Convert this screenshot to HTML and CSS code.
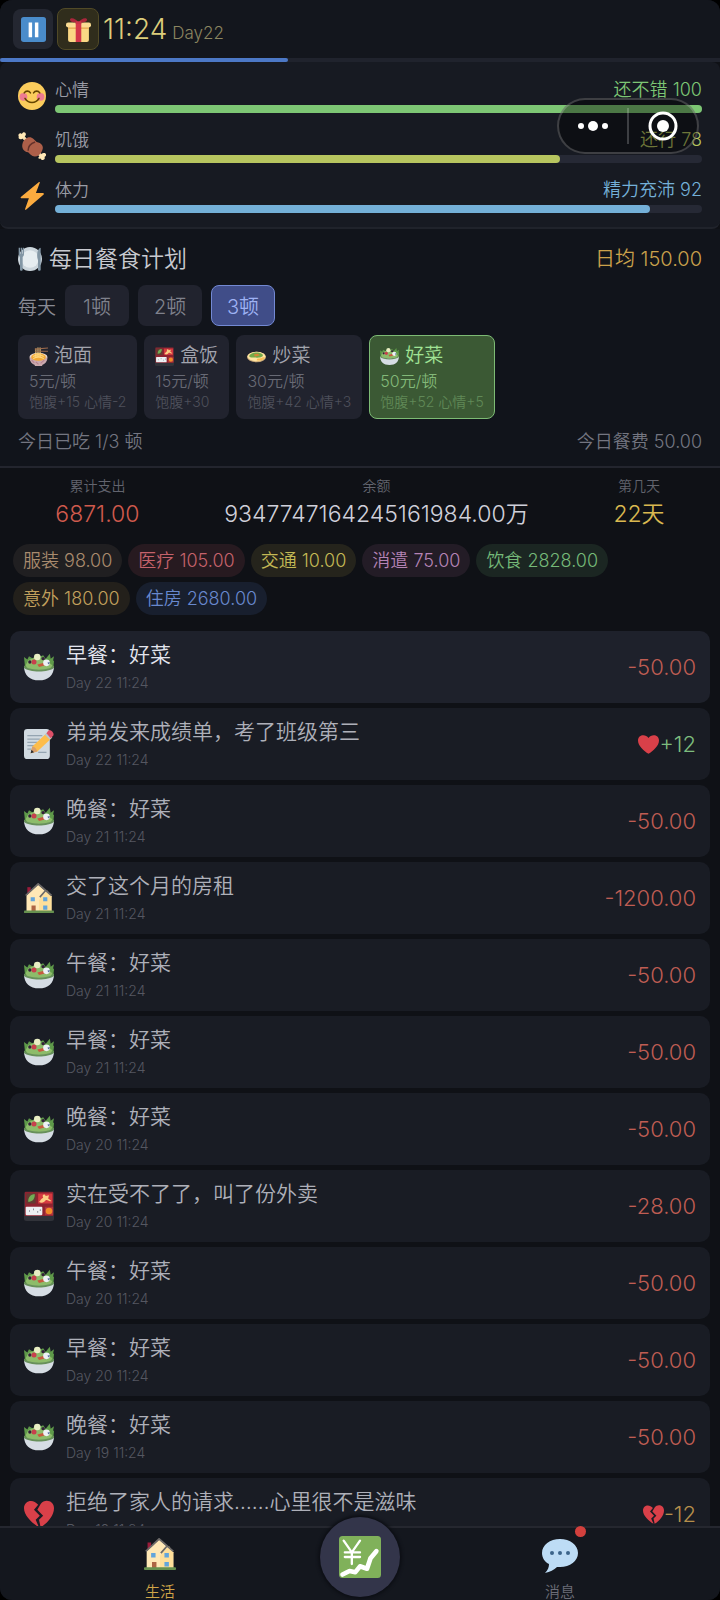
FILE: index.html
```html
<!DOCTYPE html>
<html lang="zh-CN">
<head>
  <meta charset="UTF-8" />
  <meta name="viewport" content="width=device-width, initial-scale=1.0"/>
  <title>生活</title>
  <link rel="stylesheet" href="styles.css">
</head>
<body>
  <!-- shared icons -->
  <svg class="sprite" aria-hidden="true">
    <symbol id="i-pause" viewBox="0 0 36 36">
      <rect width="36" height="36" rx="4" fill="#4a8ccb"/>
      <path d="M11 8h5v21h-5zM20 8h5v21h-5z" fill="#fff"/>
    </symbol>
    <symbol id="i-gift" viewBox="0 0 36 36">
      <path d="M3 14h30v19a3 3 0 0 1-3 3H6a3 3 0 0 1-3-3z" fill="#fbd884"/>
      <path d="M3 14h30v3H3z" fill="#e4a64f"/>
      <rect y="8" width="36" height="7" rx="3" fill="#fbdc92"/>
      <path d="M14 8h8v28h-8z" fill="#d4374a"/>
      <path d="M18 8C15 2 7 0 6 3c-2 4 7 6 12 5zM18 8c3-6 11-8 12-5 2 4-7 6-12 5z" fill="#a9263b"/>
      <path d="M14 6h8v4h-8z" fill="#ca3348"/>
    </symbol>
    <symbol id="i-smile" viewBox="0 0 36 36">
      <circle cx="18" cy="18" r="18" fill="#fbcc5c"/>
      <circle cx="7" cy="19" r="5" fill="#ee7b91"/>
      <circle cx="29" cy="19" r="5" fill="#ee7b91"/>
      <path d="M8 14c2-3 6-3 8 0M20 14c2-3 6-3 8 0M9 21c4 7 14 7 18 0" fill="none" stroke="#664500" stroke-width="2" stroke-linecap="round"/>
    </symbol>
    <symbol id="i-meat" viewBox="0 0 36 36">
      <path d="M5 5l8 8M23 24l8 8" stroke="#f4dfb0" stroke-width="4"/>
      <path d="M1 6c-2-4 3-6 4-3 1-4 6-3 5 1-1 3-3 3-5 5-3 1-5-1-4-3zM28 31c2-3 3-4 5-4 4 0 4 4 1 5 2 3-3 6-5 2-3 1-4-1-1-3z" fill="#ffe8b6"/>
      <path d="M6 14C8 8 15 4 20 9l4 4c6 1 10 6 7 11-3 7-10 10-15 5l-3-3c-6-1-9-6-7-12z" fill="#ad5f49"/>
      <path d="M13 24c0-5 3-9 9-11" fill="none" stroke="#64312a" stroke-width="2"/>
    </symbol>
    <symbol id="i-bolt" viewBox="0 0 36 36">
      <path d="M27 0L4 19c-1 1-1 2 1 2h9L9 35c0 1 1 1 2 0l22-19c1-1 0-2-1-2h-9l5-13c0-1 0-1-1-1z" fill="#fbab3f"/>
    </symbol>
    <symbol id="i-plate" viewBox="0 0 36 36">
      <circle cx="18" cy="18" r="18" fill="#ccd6dd"/>
      <circle cx="18" cy="18" r="13" fill="#e6edf1"/>
      <path d="M1 1v10c0 2 1 3 2 4v19c0 2 4 2 4 0V15c1-1 2-2 2-4V1H7v9H6V1H4v9H3V1z" fill="#8296a5"/>
      <path d="M34 1c-4 1-6 7-5 15l1 4v14c0 2 4 2 4 0z" fill="#8296a5"/>
    </symbol>
    <symbol id="i-noodle" viewBox="0 0 36 36">
      <ellipse cx="18" cy="19" rx="17" ry="8" fill="#e9d6cc"/>
      <path d="M1 20h34c0 7-5 13-10 14v2H11v-2C6 33 1 27 1 20z" fill="#caa9ad"/>
      <ellipse cx="18" cy="19" rx="14" ry="7" fill="#f3a935"/>
      <path d="M8 18c6-4 14-4 20 0M8 22c6-4 14-4 20 0" fill="none" stroke="#ffd983" stroke-width="2"/>
      <path d="M13 20V3M17 20V1M21 20V1" stroke="#ffd983" stroke-width="2"/>
      <path d="M11 4l25-2M11 8h25" stroke="#9b6a4c" stroke-width="2"/>
      <path d="M5 25l5 5M13 28l5 5M22 31l7-6" stroke="#b98390" stroke-width="2"/>
    </symbol>
    <symbol id="i-bento" viewBox="0 0 36 36">
      <rect y="1" width="36" height="35" rx="3" fill="#31333a"/>
      <path d="M1 1h34v29H1z" fill="#8e2330"/>
      <path d="M3 3h11v12H3z" fill="#633b32"/>
      <path d="M5 13c0-6 3-9 8-9 0 6-3 9-8 9z" fill="#71ac55"/>
      <path d="M17 3h17v12H17z" fill="#d53a40"/>
      <path d="M18 13c2-1 2-4 5-5-2-4 2-5 3-2l4-1-1 4 4 3c-4 1-4-2-7-1-2 3-5 4-8 2z" fill="#fbcf85"/>
      <rect x="2" y="19" width="20" height="10" rx="1" fill="#edf0f3"/>
      <path d="M6 24h1M11 22h1M16 25h1M19 23h1" stroke="#777c89" stroke-width="2"/>
      <path d="M25 19h10v10H25z" fill="#b0343d"/>
      <circle cx="30" cy="24" r="4" fill="#f18b28"/>
    </symbol>
    <symbol id="i-pan" viewBox="0 0 36 36">
      <ellipse cx="18" cy="19" rx="18" ry="10" fill="#c9a878"/>
      <ellipse cx="18" cy="18" rx="17" ry="9" fill="#ffe5a3"/>
      <path d="M4 17c3-6 16-9 24-4 7 5-5 8-13 7-6 0-10 0-11-3z" fill="#75a948"/>
      <path d="M13 14l8-1 3 3-9 2z" fill="#d38638"/>
      <path d="M20 22c8 0 9-4 14-2-3 5-9 7-16 5z" fill="#f9bb52"/>
    </symbol>
    <symbol id="i-salad" viewBox="0 0 36 36">
      <path d="M1 16L0 6l4 3 2-4 5 3 2-5 5 3 5-2 3 4 5-6 1 6 4-3-1 5 1 1-1 9H2z" fill="#5f9a4a"/>
      <path d="M2 16l3-6 7-3 7 1 9 3 6 5-4 8H6z" fill="#8dbc6a"/>
      <path d="M0 17c5 6 31 6 36 0 0 11-7 17-18 17S0 28 0 17z" fill="#d6dde4"/>
      <path d="M0 16c5 7 31 7 36 0v3c-6 6-30 6-36 0z" fill="#67905a"/>
      <circle cx="16" cy="6" r="4" fill="#e9eec4"/>
      <circle cx="7" cy="12" r="2" fill="#35203a"/>
      <circle cx="23" cy="8" r="2" fill="#35203a"/>
      <circle cx="12" cy="12" r="3" fill="#c8404c"/>
      <path d="M16 15l8-2 2 3-8 2z" fill="#c75a3e"/>
      <circle cx="27" cy="13" r="4" fill="#eef1f6"/>
      <path d="M28 13l3-1-1 3z" fill="#455f91"/>
    </symbol>
    <symbol id="i-note" viewBox="0 0 36 36">
      <rect y="0" width="31" height="36" rx="4" fill="#d1dae1"/>
      <path d="M4 8h18M4 12h15M4 16h12M4 20h9M4 24h5M17 28h10" stroke="#95a5b2" stroke-width="1.5"/>
      <path d="M8 29l2-8L27 5l6 6-17 16z" fill="#fdbd4b"/>
      <path d="M8 29l2-8c3 0 5 3 6 6z" fill="#d99f6b"/>
      <path d="M8 29l1-4 3 3z" fill="#292f33"/>
      <path d="M25 7l3-3 6 6-3 3z" fill="#b9c6ce"/>
      <path d="M27 5l2-3c3-2 8 3 6 6l-3 3z" fill="#dc4f67"/>
    </symbol>
    <symbol id="i-house" viewBox="0 0 36 36">
      <path d="M4 5h4v8H4z" fill="#9b1c3a"/>
      <path d="M3 15L17 2l7 6 9 8v18H3z" fill="#ffe8b6"/>
      <path d="M18 20L28 9l5 7v18H18z" fill="#ffdf9a"/>
      <path d="M2 15L17 1l16 14M19 17l7-8" fill="none" stroke="#6d6a69" stroke-width="2"/>
      <path d="M8 17h5v5H8zM23 17h5v5h-5zM23 27h5v5h-5z" fill="#63a5dc"/>
      <path d="M9 27h5v8H9z" fill="#ad6545"/>
      <rect y="33" width="36" height="3" rx="1" fill="#67914f"/>
    </symbol>
    <symbol id="i-heart" viewBox="0 0 36 36">
      <path d="M18 34C10 29 0 20 0 11 0 1 13-1 18 7 23-1 36 1 36 11c0 9-10 18-18 23z" fill="#d94049"/>
    </symbol>
    <symbol id="i-broken" viewBox="0 0 36 36">
      <path d="M17 7l-5 6 7 7-5 5 4 9C10 29 0 20 0 11 0 2 11-1 17 7z" fill="#d94049"/>
      <path d="M20 6l-4 7 7 7-5 5 2 9c8-5 16-14 16-23C36 2 25-1 20 6z" fill="#d94049"/>
    </symbol>
    <symbol id="i-chart" viewBox="0 0 36 36">
      <rect width="36" height="36" rx="3" fill="#80b15a"/>
      <path d="M4 4l7 10 7-10M11 14v10M5 14h13M5 18h13" fill="none" stroke="#fff" stroke-width="2" stroke-linecap="round"/>
      <path d="M3 33l6-3 5 1 4-5 6 2 3-9 5-6" fill="none" stroke="#fff" stroke-width="4" stroke-linecap="round" stroke-linejoin="round"/>
    </symbol>
    <symbol id="i-chat" viewBox="0 0 36 36">
      <path d="M18 1c10 0 18 6 18 14s-8 14-18 14h-3c-3 3-7 5-12 6 3-3 4-6 4-9-4-2-7-6-7-11C0 7 8 1 18 1z" fill="#bddcf5"/>
      <circle cx="10" cy="15" r="2" fill="#3b6489"/>
      <circle cx="18" cy="15" r="2" fill="#3b6489"/>
      <circle cx="26" cy="15" r="2" fill="#3b6489"/>
    </symbol>
  </svg>

  <div class="app">
    <header class="topbar">
      <button class="top-btn" aria-label="暂停"><svg><use href="#i-pause"/></svg></button>
      <button class="top-btn gift" aria-label="礼物"><svg><use href="#i-gift"/></svg></button>
      <div class="clock">11:24<span>Day22</span></div>
    </header>
    <div class="day-track"><div class="day-fill" style="width:40%"></div></div>

    <section class="stats">
      <div class="stat mood">
        <svg><use href="#i-smile"/></svg>
        <div class="stat-body">
          <div class="stat-text"><span>心情</span><b>还不错 100</b></div>
          <div class="bar"><div class="fill" style="width:100%"></div></div>
        </div>
      </div>
      <div class="stat hunger">
        <svg><use href="#i-meat"/></svg>
        <div class="stat-body">
          <div class="stat-text"><span>饥饿</span><b>还行 78</b></div>
          <div class="bar"><div class="fill" style="width:78%"></div></div>
        </div>
      </div>
      <div class="stat energy">
        <svg><use href="#i-bolt"/></svg>
        <div class="stat-body">
          <div class="stat-text"><span>体力</span><b>精力充沛 92</b></div>
          <div class="bar"><div class="fill" style="width:92%"></div></div>
        </div>
      </div>
    </section>

    <section class="meals">
      <div class="meals-head">
        <h2><svg><use href="#i-plate"/></svg>每日餐食计划</h2>
        <span class="avg">日均 150.00</span>
      </div>
      <div class="times">
        <span>每天</span>
        <button>1顿</button>
        <button>2顿</button>
        <button class="on">3顿</button>
      </div>
      <div class="plans">
        <button class="plan">
          <span class="plan-name"><svg><use href="#i-noodle"/></svg>泡面</span>
          <span class="plan-price">5元/顿</span>
          <span class="plan-desc">饱腹+15 心情-2</span>
        </button>
        <button class="plan">
          <span class="plan-name"><svg><use href="#i-bento"/></svg>盒饭</span>
          <span class="plan-price">15元/顿</span>
          <span class="plan-desc">饱腹+30</span>
        </button>
        <button class="plan">
          <span class="plan-name"><svg><use href="#i-pan"/></svg>炒菜</span>
          <span class="plan-price">30元/顿</span>
          <span class="plan-desc">饱腹+42 心情+3</span>
        </button>
        <button class="plan on">
          <span class="plan-name"><svg><use href="#i-salad"/></svg>好菜</span>
          <span class="plan-price">50元/顿</span>
          <span class="plan-desc">饱腹+52 心情+5</span>
        </button>
      </div>
      <div class="meals-foot"><span>今日已吃 1/3 顿</span><span>今日餐费 50.00</span></div>
    </section>

    <section class="summary">
      <div class="sum out"><span>累计支出</span><strong>6871.00</strong></div>
      <div class="sum"><span>余额</span><strong>9347747164245161984.00万</strong></div>
      <div class="sum day"><span>第几天</span><strong>22天</strong></div>
    </section>

    <div class="tags">
      <span class="tag clothes">服装 98.00</span>
      <span class="tag medical">医疗 105.00</span>
      <span class="tag traffic">交通 10.00</span>
      <span class="tag fun">消遣 75.00</span>
      <span class="tag food">饮食 2828.00</span>
      <span class="tag accident">意外 180.00</span>
      <span class="tag rent">住房 2680.00</span>
    </div>

    <ul class="log">
      <li class="new"><svg><use href="#i-salad"/></svg><div class="what"><p>早餐：好菜</p><time>Day 22 11:24</time></div><span class="amount">-50.00</span></li>
      <li><svg><use href="#i-note"/></svg><div class="what"><p>弟弟发来成绩单，考了班级第三</p><time>Day 22 11:24</time></div><span class="amount plus"><svg><use href="#i-heart"/></svg>+12</span></li>
      <li><svg><use href="#i-salad"/></svg><div class="what"><p>晚餐：好菜</p><time>Day 21 11:24</time></div><span class="amount">-50.00</span></li>
      <li><svg><use href="#i-house"/></svg><div class="what"><p>交了这个月的房租</p><time>Day 21 11:24</time></div><span class="amount">-1200.00</span></li>
      <li><svg><use href="#i-salad"/></svg><div class="what"><p>午餐：好菜</p><time>Day 21 11:24</time></div><span class="amount">-50.00</span></li>
      <li><svg><use href="#i-salad"/></svg><div class="what"><p>早餐：好菜</p><time>Day 21 11:24</time></div><span class="amount">-50.00</span></li>
      <li><svg><use href="#i-salad"/></svg><div class="what"><p>晚餐：好菜</p><time>Day 20 11:24</time></div><span class="amount">-50.00</span></li>
      <li><svg><use href="#i-bento"/></svg><div class="what"><p>实在受不了了，叫了份外卖</p><time>Day 20 11:24</time></div><span class="amount">-28.00</span></li>
      <li><svg><use href="#i-salad"/></svg><div class="what"><p>午餐：好菜</p><time>Day 20 11:24</time></div><span class="amount">-50.00</span></li>
      <li><svg><use href="#i-salad"/></svg><div class="what"><p>早餐：好菜</p><time>Day 20 11:24</time></div><span class="amount">-50.00</span></li>
      <li><svg><use href="#i-salad"/></svg><div class="what"><p>晚餐：好菜</p><time>Day 19 11:24</time></div><span class="amount">-50.00</span></li>
      <li><svg><use href="#i-broken"/></svg><div class="what"><p>拒绝了家人的请求……心里很不是滋味</p><time>Day 19 11:24</time></div><span class="amount minus"><svg><use href="#i-broken"/></svg>-12</span></li>
    </ul>

    <nav class="tabbar">
      <a href="#life" class="tab on"><svg><use href="#i-house"/></svg>生活</a>
      <a href="#market" class="tab-main" aria-label="行情"><svg><use href="#i-chart"/></svg></a>
      <a href="#messages" class="tab"><span class="tab-icon"><svg class="chat"><use href="#i-chat"/></svg><i class="dot"></i></span>消息</a>
    </nav>
  </div>

  <!-- mini program capsule, floats over the page -->
  <div class="capsule">
    <button aria-label="更多"><svg viewBox="0 0 32 12"><circle cx="4" cy="6" r="3"/><circle cx="16" cy="6" r="5"/><circle cx="28" cy="6" r="3"/></svg></button>
    <button aria-label="关闭"><svg class="ring" viewBox="0 0 30 30"><circle cx="15" cy="15" r="13" fill="none" stroke="#fff" stroke-width="3"/><circle cx="15" cy="15" r="6"/></svg></button>
  </div>
</body>
</html>
```

FILE: styles.css
```css
* {
  box-sizing: border-box;
}

body {
  margin: 0;
  background: #000;
  color: #c8cad3;
  font-family: Inter, "Noto Sans CJK SC", sans-serif;
  font-size: 18px;
  font-weight: 350;
}

.sprite {
  position: absolute;
  width: 0;
  height: 0;
}

button {
  padding: 0;
  border: 1px solid transparent;
  background: none;
  color: inherit;
  font: inherit;
  cursor: pointer;
}

svg {
  display: block;
  flex: none;
}

.app {
  display: flex;
  flex-direction: column;
  height: 100vh;
  overflow: hidden;
  border-radius: 12px;
  background: #0f1116;
}

/* top bar */
.topbar {
  display: flex;
  flex: none;
  align-items: center;
  gap: 4px;
  height: 58px;
  padding: 0 13px;
  background: #13161d;
}

.top-btn {
  display: flex;
  align-items: center;
  justify-content: center;
  width: 40px;
  height: 40px;
  border-radius: 8px;
  background: #242731;
}

.top-btn svg {
  width: 25px;
  height: 25px;
}

.top-btn.gift {
  width: 42px;
  height: 42px;
  border-color: #514a27;
  background: #302d1c;
}

.clock {
  display: flex;
  align-items: baseline;
  gap: 5px;
  color: #dccd7b;
  font-size: 28px;
}

.clock span {
  color: #8b8560;
  font-size: 17px;
}

.day-track {
  flex: none;
  height: 4px;
  background: #20232d;
}

.day-fill {
  height: 4px;
  border-radius: 2px;
  background: #4c78c6;
}

/* stats */
.stats {
  display: flex;
  flex: none;
  flex-direction: column;
  gap: 15px;
  padding: 16px 18px 14px 18px;
  border-bottom: 2px solid #20232b;
  border-radius: 8px;
  background: #171a22;
}

.stat {
  display: flex;
  align-items: center;
  gap: 9px;
}

.stat > svg {
  width: 28px;
  height: 28px;
}

.stat-body {
  flex: 1;
}

.stat-text {
  display: flex;
  justify-content: space-between;
  margin-bottom: 3px;
  color: #9a9ca6;
  font-size: 17px;
  line-height: 24px;
}

.stat-text b {
  font-size: 18px;
  font-weight: 350;
}

.bar {
  height: 8px;
  border-radius: 4px;
  background: #262935;
}

.fill {
  height: 8px;
  border-radius: 4px;
}

.mood b { color: #7dc674; }
.mood .fill { background: #7dc674; }
.hunger b { color: #b7c55f; }
.hunger .fill { background: #b7c55f; }
.energy b { color: #74b0d8; }
.energy .fill { background: #74b0d8; }

/* meal plan */
.meals {
  flex: none;
  padding: 15px 18px 12px;
  border-bottom: 2px solid #23252e;
  background: #11141b;
}

.meals-head {
  display: flex;
  align-items: center;
  justify-content: space-between;
  margin-bottom: 11px;
  line-height: 30px;
}

.meals h2 {
  display: flex;
  align-items: center;
  gap: 7px;
  margin: 0;
  color: #c8cad0;
  font-size: 23px;
  font-weight: 350;
}

.meals h2 svg {
  width: 24px;
  height: 24px;
}

.avg {
  color: #caa14b;
  font-size: 20px;
}

.times {
  display: flex;
  align-items: center;
  gap: 9px;
  margin-bottom: 9px;
  color: #888a94;
  font-size: 19px;
}

.times button {
  width: 64px;
  height: 41px;
  border-radius: 8px;
  background: #21232e;
  color: #7f818c;
  font-size: 20px;
}

.times .on {
  border-color: #7389d3;
  background: #404d88;
  color: #9eb2f4;
}

.plans {
  display: flex;
  gap: 7px;
  margin-bottom: 11px;
}

.plan {
  display: flex;
  flex-direction: column;
  padding: 7px 10px;
  border-radius: 8px;
  background: #21232e;
  text-align: left;
}

.plan-name {
  display: flex;
  align-items: center;
  gap: 6px;
  color: #a3a5ae;
  font-size: 19px;
  line-height: 26px;
}

.plan-name svg {
  width: 19px;
  height: 19px;
}

.plan-price {
  color: #686a75;
  font-size: 16px;
  line-height: 24px;
}

.plan-desc {
  color: #4e505b;
  font-size: 14px;
  line-height: 18px;
}

.plan.on {
  border-color: #7dbb74;
  background: #3b5934;
}

.on .plan-name { color: #a0e394; }
.on .plan-price { color: #83b979; }
.on .plan-desc { color: #608957; }

.meals-foot {
  display: flex;
  justify-content: space-between;
  color: #747681;
  line-height: 24px;
}

/* totals */
.summary {
  display: flex;
  flex: none;
  justify-content: space-around;
  padding: 8px 13px 15px;
}

.sum {
  display: flex;
  flex-direction: column;
  align-items: center;
  gap: 3px;
}

.sum span {
  color: #62646e;
  font-size: 14px;
  line-height: 20px;
}

.sum strong {
  color: #cfd0da;
  font-size: 23px;
  font-weight: 350;
  line-height: 30px;
}

.out strong { color: #cf5a4d; }
.day strong { color: #dab850; }

.tags {
  display: flex;
  flex: none;
  flex-wrap: wrap;
  gap: 5px 6px;
  padding: 0 13px 16px;
}

.tag {
  padding: 0 10px;
  border-radius: 17px;
  line-height: 33px;
}

.clothes { background: #201f21; color: #a98b6e; }
.medical { background: #271a20; color: #c5626b; }
.traffic { background: #25241c; color: #c3b955; }
.fun { background: #231c26; color: #b583b5; }
.food { background: #1b2622; color: #75b978; }
.accident { background: #23201b; color: #c2a05d; }
.rent { background: #181f2e; color: #6888cd; }

/* event log */
.log {
  display: flex;
  flex: 1;
  flex-direction: column;
  gap: 5px;
  min-height: 0;
  margin: 0;
  padding: 0 10px;
  overflow: hidden;
  list-style: none;
}

.log li {
  display: flex;
  flex: none;
  align-items: center;
  gap: 12px;
  padding: 10px 14px;
  border-radius: 10px;
  background: #191c24;
  color: #aeb0b9;
}

.log li.new {
  background: #1e212b;
  color: #e3e5ee;
}

.log li > svg {
  width: 30px;
  height: 30px;
}

.what {
  flex: 1;
}

.what p {
  margin: 0 0 4px;
  font-size: 21px;
  line-height: 28px;
}

.what time {
  display: block;
  color: #555761;
  font-size: 14px;
  line-height: 20px;
}

.amount {
  display: flex;
  align-items: center;
  color: #bf5d53;
  font-size: 22px;
}

.amount svg {
  width: 21px;
  height: 21px;
}

.amount.plus { color: #7dbc7d; }
.amount.minus { color: #b58e4b; }

/* bottom tabs */
.tabbar {
  display: flex;
  flex: none;
  justify-content: center;
  height: 74px;
  border-top: 2px solid #25272f;
  background: #14171e;
}

.tab {
  display: flex;
  flex: 1;
  flex-direction: column;
  align-items: center;
  gap: 12px;
  padding-top: 10px;
  color: #6c6e78;
  font-size: 15px;
  line-height: 20px;
  text-decoration: none;
}

.tab.on {
  color: #d0a548;
}

.tab svg {
  width: 32px;
  height: 32px;
}

.tab svg.chat {
  width: 36px;
  height: 36px;
}

.tab-icon {
  position: relative;
  height: 32px;
}

.dot {
  position: absolute;
  top: -12px;
  right: -8px;
  width: 11px;
  height: 11px;
  border-radius: 50%;
  background: #d3403d;
}

.tab-main {
  display: flex;
  align-items: center;
  justify-content: center;
  width: 80px;
  height: 80px;
  margin-top: -11px;
  border-radius: 50%;
  background: #33354a;
  box-shadow: 0 0 3px 2px #0d0f15;
}

.tab-main svg {
  width: 42px;
  height: 42px;
}

/* capsule */
.capsule {
  position: absolute;
  top: 98px;
  right: 21px;
  display: flex;
  align-items: center;
  width: 142px;
  height: 56px;
  border: 2px solid rgba(255, 255, 255, 0.2);
  border-radius: 28px;
  background: rgba(0, 0, 0, 0.4);
}

.capsule button {
  display: flex;
  flex: 1;
  align-items: center;
  justify-content: center;
  height: 36px;
  border: 0;
}

.capsule button + button {
  border-left: 2px solid rgba(255, 255, 255, 0.2);
}

.capsule svg {
  width: 32px;
  height: 12px;
  fill: #fff;
}

.capsule svg.ring {
  width: 30px;
  height: 30px;
}
```
